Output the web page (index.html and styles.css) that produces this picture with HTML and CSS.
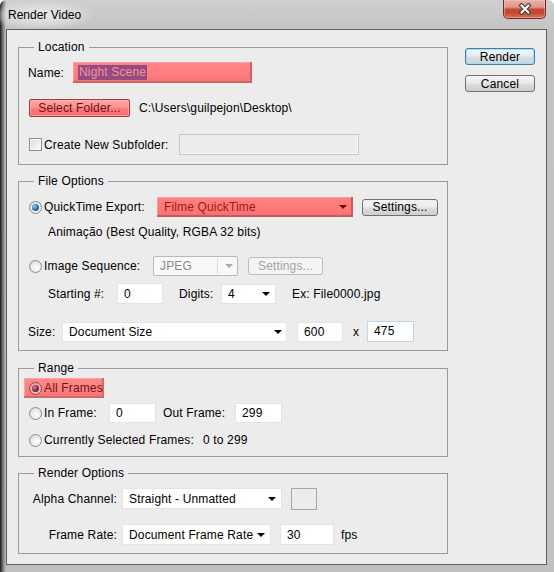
FILE: index.html
```html
<!DOCTYPE html>
<html lang="en">
<head>
<meta charset="utf-8">
<title>Render Video</title>
<link rel="stylesheet" href="styles.css">
</head>
<body>
<div class="window">
  <div class="titlebar">
    <span class="title">Render Video</span>
    <button class="close" aria-label="Close">
      <svg width="14" height="12" viewBox="0 0 14 12">
        <path d="M3.5 2.5 L10.5 9.5 M10.5 2.5 L3.5 9.5" stroke="#3a3a3a" stroke-width="4.2" stroke-linecap="square" fill="none"/>
        <path d="M3.5 2.5 L10.5 9.5 M10.5 2.5 L3.5 9.5" stroke="#ffffff" stroke-width="2" stroke-linecap="square" fill="none"/>
      </svg>
    </button>
  </div>

  <div class="client">
    <div class="groups">
      <fieldset class="group">
        <legend>Location</legend>
        <div class="row loc-name">
          <span class="lbl w-name">Name:</span>
          <div class="red-field name-field"><span class="selected-text">Night Scene</span></div>
        </div>
        <div class="row loc-folder">
          <button class="btn red-btn folder-btn">Select Folder...</button>
          <span class="path">C:\Users\guilpejon\Desktop\</span>
        </div>
        <div class="row loc-sub">
          <span class="check"></span>
          <span class="lbl w-sub">Create New Subfolder:</span>
          <span class="field off sub-field"></span>
        </div>
      </fieldset>

      <fieldset class="group g-file">
        <legend>File Options</legend>
        <div class="row f-qt">
          <span class="radio on"></span>
          <span class="lbl w-qt">QuickTime Export:</span>
          <div class="dd red-dd qt-dd"><span class="txt">Filme QuickTime</span><span class="arrow"></span></div>
          <button class="btn settings-btn">Settings...</button>
        </div>
        <div class="row f-desc">Animação (Best Quality, RGBA 32 bits)</div>
        <div class="row f-seq">
          <span class="radio"></span>
          <span class="lbl w-seq">Image Sequence:</span>
          <div class="dd off jpeg-dd"><span class="txt">JPEG</span><span class="sep"></span><span class="arrow"></span></div>
          <button class="btn off settings-off">Settings...</button>
        </div>
        <div class="row f-start">
          <span class="lbl w-start">Starting #:</span>
          <span class="field w46">0</span>
          <span class="lbl w-digits">Digits:</span>
          <div class="dd digits-dd"><span class="txt">4</span><span class="arrow"></span></div>
          <span class="example">Ex: File0000.jpg</span>
        </div>
        <div class="row f-size">
          <span class="lbl w-size">Size:</span>
          <div class="dd size-dd"><span class="txt">Document Size</span><span class="arrow"></span></div>
          <span class="field w46 size-w">600</span>
          <span class="lbl w-x">x</span>
          <span class="field focus w47">475</span>
        </div>
      </fieldset>

      <fieldset class="group g-range">
        <legend>Range</legend>
        <div class="row r-all">
          <div class="red-pick">
            <span class="radio on red"></span>
            <span class="lbl">All Frames</span>
          </div>
        </div>
        <div class="row r-in">
          <span class="radio"></span>
          <span class="lbl w-in">In Frame:</span>
          <span class="field w47">0</span>
          <span class="lbl w-out">Out Frame:</span>
          <span class="field w47">299</span>
        </div>
        <div class="row r-cur">
          <span class="radio"></span>
          <span class="lbl w-cur">Currently Selected Frames:</span>
          <span>0 to 299</span>
        </div>
      </fieldset>

      <fieldset class="group g-render">
        <legend>Render Options</legend>
        <div class="row o-alpha">
          <span class="lbl right">Alpha Channel:</span>
          <div class="dd alpha-dd"><span class="txt">Straight - Unmatted</span><span class="arrow"></span></div>
          <span class="swatch"></span>
        </div>
        <div class="row o-rate">
          <span class="lbl right">Frame Rate:</span>
          <div class="dd rate-dd"><span class="txt">Document Frame Rate</span><span class="arrow"></span></div>
          <span class="field fps-field">30</span>
          <span class="fps">fps</span>
        </div>
      </fieldset>
    </div>

    <div class="actions">
      <button class="btn default">Render</button>
      <button class="btn">Cancel</button>
    </div>
  </div>
</div>
</body>
</html>
```

FILE: styles.css
```css
* { box-sizing: border-box; }

html, body {
  margin: 0;
  padding: 0;
  background: #ffffff;
}

body {
  font-family: "Liberation Sans", Arial, sans-serif;
  font-size: 12px;
  letter-spacing: 0.15px;
  color: #000;
}

/* window frame (glass) */
.window {
  width: 554px;
  height: 572px;
  display: flex;
  flex-direction: column;
  border-radius: 6px 6px 0 0;
  overflow: hidden;
  background:
    linear-gradient(to right, #151515 0, #3c3c3c 1px, #7c7c7c 3px, rgba(190,190,190,0) 6px) left top / 8px 100% no-repeat,
    linear-gradient(to bottom, #cfcfcf 0, #c3c3c3 30px, #c0c0c0 100%);
}

.titlebar {
  height: 29px;
  display: flex;
  align-items: flex-start;
  flex: none;
}

.title {
  margin-top: 1px;
  padding: 7px 12px 7px 8px;
  line-height: 14px;
  font-size: 12px;
  letter-spacing: 0;
  color: #000;
  background: radial-gradient(ellipse at 45% 50%, rgba(235,235,235,0.95) 0, rgba(225,225,225,0.6) 50%, rgba(200,200,200,0) 75%);
}

.close {
  margin-left: auto;
  margin-right: 8px;
  width: 43px;
  height: 19px;
  padding: 0;
  border: 1px solid #6a3026;
  border-top: none;
  border-radius: 0 0 5px 5px;
  display: flex;
  align-items: center;
  justify-content: center;
  background: linear-gradient(to bottom, #e9b1a6 0, #e0958a 40%, #c8472e 52%, #c24a30 72%, #d6735e 100%);
  box-shadow: inset 0 0 0 1px rgba(255,200,190,0.45);
}

/* client area */
.client {
  margin: 0 7px 0 6px;
  width: 541px;
  height: 536px;
  border: 1px solid #5f5f5f;
  background: #ececec;
  display: flex;
  padding: 10px 0 0 11px;
}

.groups {
  display: flex;
  flex-direction: column;
  width: 430px;
}

.actions {
  display: flex;
  flex-direction: column;
  gap: 10px;
  margin-left: 17px;
  padding-top: 8px;
  width: 70px;
}

/* group boxes */
.group {
  margin: 0;
  width: 430px;
  min-width: 0;
  padding: 0 9px 8px 9px;
  border: 1px solid #9a9a9a;
}

.group legend {
  margin-left: 6px;
  padding: 0 4px;
  line-height: 14px;
  font-size: 12px;
}

.g-file { margin-top: 9px; }
.g-range { margin-top: 10px; }
.g-render { margin-top: 9px; }

.row {
  display: flex;
  align-items: center;
  white-space: nowrap;
}

.lbl { flex: none; }

/* Location rows */
.loc-name { height: 21px; margin-top: 8px; }
.loc-folder { height: 18px; margin-top: 16px; }
.loc-sub { height: 21px; margin-top: 17px; padding-bottom: 0; }
.group:first-child { padding-bottom: 9px; }

.w-name { width: 45px; }
.w-sub { width: 135px; margin-left: 2px; }

.red-field {
  width: 179px;
  height: 21px;
  display: flex;
  align-items: center;
  padding-left: 5px;
  background: linear-gradient(to bottom, #ff8686 0, #ff7c7c 60%, #f57373 100%);
  box-shadow: inset -2px -2px 0 #c96565, inset 1px 1px 0 #ff9f9f;
}

.selected-text {
  background: #974a80;
  color: #f4949a;
  height: 15px;
  line-height: 15px;
  padding: 0 1px;
}

.btn {
  font-family: "Liberation Sans", Arial, sans-serif;
  font-size: 12px;
  letter-spacing: 0.15px;
  color: #000;
  height: 17px;
  padding: 0;
  border: 1px solid #707070;
  border-radius: 3px;
  line-height: 14px;
  background: linear-gradient(to bottom, #f3f3f3 0, #ebebeb 48%, #dddddd 52%, #cfcfcf 100%);
  flex: none;
}

.btn.default {
  border-color: #3c7fb1;
  box-shadow: inset 0 0 0 1px #a6dcf6;
  background: linear-gradient(to bottom, #f0f5f8 0, #e6edf1 48%, #d6dfe4 52%, #c9d3d8 100%);
}

.actions .btn { width: 70px; height: 17px; }

.red-btn {
  border-color: #a13c3c;
  border-radius: 2px;
  color: #701010;
  background: linear-gradient(to bottom, #ffa4a4 0, #ff8f8f 48%, #f97c7c 52%, #f06b6b 100%);
  box-shadow: inset 0 0 0 1px rgba(255,190,190,0.5);
}

.folder-btn { width: 101px; height: 18px; margin-left: 1px; }

.path { margin-left: 9px; }

.check {
  flex: none;
  width: 13px;
  height: 13px;
  margin-left: 1px;
  border: 1px solid #8e8f8f;
  background: linear-gradient(135deg, #dcdcdc 0, #f3f3f3 70%, #ffffff 100%);
  box-shadow: inset 0 0 0 1px #f4f4f4;
}

.field {
  flex: none;
  height: 21px;
  display: flex;
  align-items: center;
  padding-left: 6px;
  background: #ffffff;
  border: 1px solid #e3e3e3;
}

.field.off {
  background: #ececec;
  border: 1px solid #c6c6c6;
  box-shadow: inset -1px -1px 0 #f8f8f8;
}

.field.focus { border-color: #bfd6ec; }

.sub-field { width: 180px; }
.w46 { width: 46px; }
.w47 { width: 47px; }

/* radios */
.radio {
  flex: none;
  width: 13px;
  height: 13px;
  margin-left: 1px;
  border-radius: 50%;
  border: 1px solid #8b8c8c;
  background: radial-gradient(circle at 60% 60%, #ffffff 0, #ececec 45%, #cfcfcf 100%);
  display: flex;
  align-items: center;
  justify-content: center;
}

.radio.on::after {
  content: "";
  width: 7px;
  height: 7px;
  border-radius: 50%;
  background: radial-gradient(circle at 35% 35%, #8fd0ff 0, #2f7fc0 45%, #0f3d6e 100%);
}

.radio.red {
  border-color: #8a5050;
  background: radial-gradient(circle at 60% 60%, #ffd0d0 0, #f2b0b0 45%, #d99090 100%);
}

.radio.red::after {
  background: radial-gradient(circle at 35% 35%, #d080a0 0, #8a2a52 50%, #5a1030 100%);
}

/* dropdowns */
.dd {
  flex: none;
  height: 20px;
  display: flex;
  align-items: center;
  padding: 0 5px 0 6px;
  background: #ffffff;
  border: 1px solid #e4e4e4;
}

.dd .txt { flex: 1; }

.arrow {
  flex: none;
  width: 0;
  height: 0;
  border-left: 4px solid transparent;
  border-right: 4px solid transparent;
  border-top: 4px solid #000;
}

.red-dd {
  border: none;
  color: #a51414;
  padding: 0 6px 0 7px;
  background: linear-gradient(to bottom, #ff8282 0, #ff7878 60%, #f27070 100%);
  box-shadow: inset -2px -2px 0 #c45c5c, inset 1px 1px 0 #ff9c9c;
}

.red-dd .arrow { border-top-color: #7a0000; }

.dd.off {
  background: #f8f8f8;
  border: 1px solid #b9b9b9;
  border-radius: 2px;
  color: #8c8c8c;
  padding-right: 4px;
}

.dd.off .sep {
  width: 1px;
  height: 16px;
  background: #dedede;
  margin-right: 7px;
}

.dd.off .arrow { border-top-color: #a9a9a9; }

/* File Options rows */
.f-qt { height: 20px; margin-top: 9px; }
.f-desc { height: 14px; margin-top: 8px; padding-left: 20px; }
.f-seq { height: 20px; margin-top: 17px; }
.f-start { height: 21px; margin-top: 7px; }
.f-size { height: 20px; margin-top: 18px; }

.w-qt { width: 113px; margin-left: 2px; }
.qt-dd { width: 196px; }
.settings-btn { width: 76px; margin-left: 9px; }

.w-seq { width: 109px; margin-left: 2px; }
.jpeg-dd { width: 85px; }
.settings-off {
  width: 75px;
  height: 18px;
  margin-left: 10px;
  color: #a3a3a3;
  border-color: #bcbcbc;
  background: #f4f4f4;
}

.w-start { width: 69px; margin-left: 20px; }
.w-digits { width: 42px; margin-left: 16px; }
.digits-dd { width: 55px; }
.example { margin-left: 16px; }

.w-size { width: 34px; }
.size-dd { width: 225px; padding-right: 4px; }
.size-w { margin-left: 10px; height: 20px; }
.w-x { width: 14px; margin-left: 10px; }
.f-size .w47 { height: 21px; margin-top: -2px; }

/* Range rows */
.r-all { height: 20px; margin-top: 3px; }
.r-in { height: 20px; margin-top: 5px; }
.r-cur { height: 16px; margin-top: 9px; }

.red-pick {
  margin-left: -4px;
  width: 80px;
  height: 20px;
  display: flex;
  align-items: center;
  padding-left: 4px;
  color: #701414;
  background: linear-gradient(to bottom, #ff8a8a 0, #ff7f7f 60%, #f47272 100%);
  box-shadow: inset -2px -2px 0 #cf6a6a, inset 1px 1px 0 #ffa2a2;
}

.red-pick .lbl { margin-left: 2px; }

.w-in { width: 65px; margin-left: 2px; }
.w-out { width: 72px; margin-left: 7px; }
.r-in .field { height: 20px; }
.w-cur { width: 159px; margin-left: 2px; }

/* Render Options rows */
.o-alpha { height: 21px; margin-top: 8px; }
.o-rate { height: 21px; margin-top: 15px; }

.right { width: 89px; text-align: right; }

.alpha-dd { width: 160px; height: 21px; margin-left: 5px; }
.rate-dd { width: 149px; height: 21px; margin-left: 5px; }

.swatch {
  flex: none;
  width: 26px;
  height: 22px;
  margin-left: 9px;
  border: 1px solid #a6a6a6;
  background: #ececec;
}

.fps-field { width: 54px; margin-left: 9px; }
.fps { margin-left: 7px; }
```
